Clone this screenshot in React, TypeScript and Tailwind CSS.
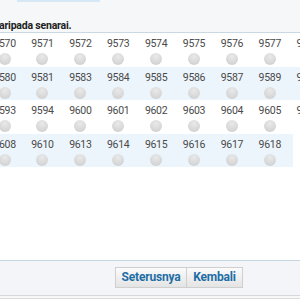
import React from "react";

const rows: (string[])[] = [
  ["9570", "9571", "9572", "9573", "9574", "9575", "9576", "9577", "9578"],
  ["9580", "9581", "9583", "9584", "9585", "9586", "9587", "9589", "9590"],
  ["9593", "9594", "9600", "9601", "9602", "9603", "9604", "9605", "9606"],
  ["9608", "9610", "9613", "9614", "9615", "9616", "9617", "9618"],
];

function Cell({ n }: { n: string }) {
  return (
    <div className="w-[37.9px] shrink-0 flex flex-col items-center pt-[4px]">
      <div className="text-[10.5px] leading-[14px] text-[#4a4a4a] tracking-[-0.3px]" style={{ fontFamily: "Roboto, sans-serif" }}>{n}</div>
      <div className="mt-[2px] w-[12px] h-[12px] rounded-full bg-[radial-gradient(circle_at_50%_30%,#e9e9e9,#cccccc)]" />
    </div>
  );
}

export default function App() {
  return (
    <div className="w-[300px] h-[300px] overflow-hidden bg-white flex flex-col" style={{ fontFamily: "Roboto, sans-serif" }}>
      <div className="h-[32px] bg-[#f6f7f9] relative shrink-0">
        <div className="absolute left-[17px] top-0 w-[83px] h-[2px] bg-[#d6e7f5]" />
        <div className="pt-[19px] text-[10.5px] leading-[14px] font-bold text-[#222] ml-[-1px] tracking-[-0.2px]">aripada senarai.</div>
      </div>
      <div className="h-[1px] bg-[#c9d8e3] shrink-0" />
      <div className="flex flex-col shrink-0">
        {rows.map((r, i) => (
          <div key={i} className={`h-[33.5px] flex ${i === 3 ? "" : i % 2 === 1 ? "bg-[#edf5fc]" : "bg-white"}`}>
            <div className={`flex ml-[-14.4px] ${i === 3 ? "bg-[#edf5fc] pr-[4px]" : ""}`}>
              {r.map((n) => (
                <Cell key={n} n={n} />
              ))}
            </div>
          </div>
        ))}
      </div>
      <div className="flex-1" />
      <div className="h-[1px] bg-[#c5d6e3] shrink-0" />
      <div className="h-[34px] bg-[#f3f5f8] flex items-start pt-[6px] shrink-0 pl-[115px]">
        <div className="flex">
          <button className="h-[21px] w-[72px] border border-[#cfcfcf] bg-[linear-gradient(#fbfbfb,#e4e4e4)] text-[12px] font-bold text-[#1e6ea6] leading-[19px] tracking-[-0.2px]">Seterusnya</button>
          <button className="h-[21px] w-[56px] border border-l-0 border-[#cfcfcf] bg-[linear-gradient(#fbfbfb,#e4e4e4)] text-[12px] font-bold text-[#1e6ea6] leading-[19px] tracking-[-0.2px]">Kembali</button>
        </div>
      </div>
      <div className="h-[1px] bg-[#d5d9de] shrink-0" />
      <div className="h-[2px] bg-[#f7f7f7] shrink-0" />
      <div className="h-[1px] bg-[#dcdcdc] shrink-0" />
      <div className="h-[1px] bg-white shrink-0" />
    </div>
  );
}
